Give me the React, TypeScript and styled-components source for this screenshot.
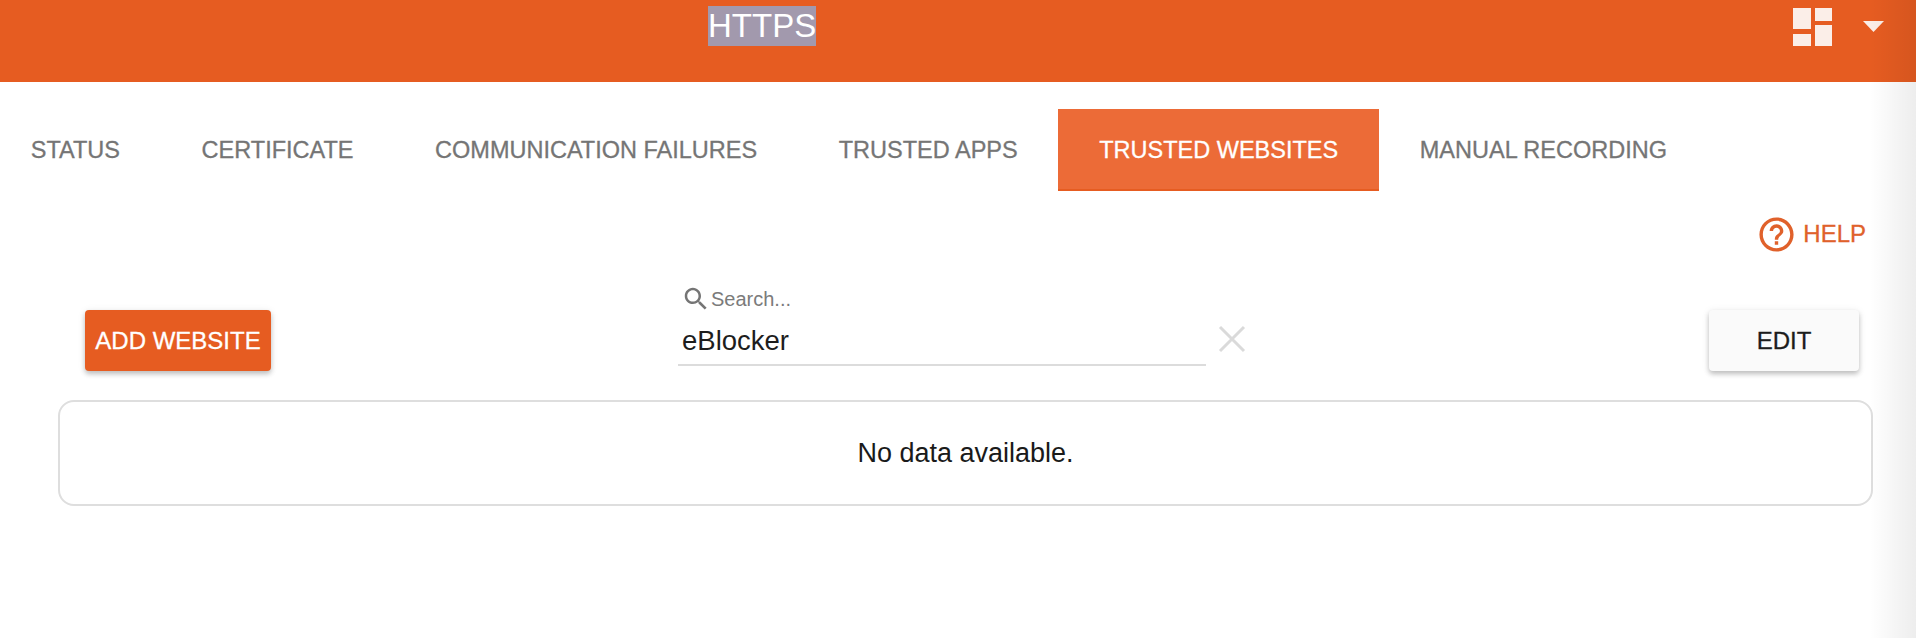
import { createGlobalStyle, styled } from "styled-components";

const GlobalStyle = createGlobalStyle`
  html, body {
    margin: 0;
    padding: 0;
    background: #fff;
    overflow: hidden;
  }

  body {
    font-family: "Liberation Sans", Arial, sans-serif;
  }
`;

const Page = styled.div`
  position: relative;
  width: 1916px;
  height: 638px;
  overflow: hidden;

  &::after {
    content: "";
    position: absolute;
    top: 0;
    right: 0;
    bottom: 0;
    width: 46px;
    background: linear-gradient(to right, rgba(0, 0, 0, 0), rgba(0, 0, 0, 0.07));
    pointer-events: none;
  }
`;

const Header = styled.header`
  display: flex;
  align-items: flex-start;
  justify-content: space-between;
  height: 82px;
  padding: 6px 32px 0 708px;
  box-sizing: border-box;
  background: #e65c21;
`;

const Title = styled.span`
  font-size: 33px;
  line-height: 40px;
  color: #fff;
  background: #a299ad;
`;

const HeaderTools = styled.div`
  display: flex;
  align-items: flex-start;
  gap: 30px;
  padding-top: 2px;
`;

const Tabs = styled.nav`
  display: flex;
  margin: 27px 0 0 -10px;
`;

const Tab = styled.div<{ $active?: boolean }>`
  height: 82px;
  padding: 3px 40.8px 0;
  box-sizing: border-box;
  display: flex;
  align-items: center;
  font-size: 23.5px;
  -webkit-text-stroke: 0.3px currentColor;
  color: ${(p) => (p.$active ? "#fff" : "#757575")};
  background: ${(p) => (p.$active ? "#ec6b37" : "transparent")};
  border-bottom: 2px solid ${(p) => (p.$active ? "#e65c21" : "transparent")};
`;

const HelpRow = styled.div`
  display: flex;
  justify-content: flex-end;
  align-items: center;
  gap: 6px;
  height: 34px;
  margin-top: 26px;
  padding-right: 50px;
  font-size: 24px;
  -webkit-text-stroke: 0.3px currentColor;
  color: #e0612b;
`;

const Toolbar = styled.div`
  display: flex;
  align-items: flex-start;
  margin-top: 36px;
  padding: 0 57px 0 85px;
`;

const Button = styled.button<{ $primary?: boolean }>`
  height: 61px;
  padding: 0;
  width: ${(p) => (p.$primary ? "186px" : "150px")};
  border: 0;
  border-radius: 4px;
  margin-top: 23px;
  font-family: inherit;
  font-size: 24px;
  -webkit-text-stroke: 0.3px currentColor;
  color: ${(p) => (p.$primary ? "#fff" : "#1c1c1c")};
  background: ${(p) => (p.$primary ? "#e65c21" : "#fafafa")};
  box-shadow: 0 3px 5px rgba(0, 0, 0, 0.22), 0 1px 8px rgba(0, 0, 0, 0.08);
`;

const Search = styled.div`
  width: 528px;
  margin-left: 407px;
`;

const SearchLabel = styled.div`
  display: flex;
  align-items: center;
  height: 24px;
  padding-left: 3px;
  font-size: 20px;
  color: #7b7b7b;
`;

const SearchValue = styled.div`
  height: 55px;
  padding: 12px 0 0 4px;
  box-sizing: border-box;
  line-height: 36px;
  font-size: 27.5px;
  color: #1d1d1d;
  border-bottom: 2px solid #dcdcdc;
`;

const ClearIcon = styled.svg`
  flex: none;
  margin: 38px 0 0 12px;
`;

const EditSlot = styled.div`
  margin-left: auto;
`;

const Card = styled.div`
  display: flex;
  align-items: center;
  justify-content: center;
  height: 106px;
  margin: 29px 43px 0 58px;
  box-sizing: border-box;
  border: 2px solid #dedede;
  border-radius: 16px;
  font-size: 27px;
  color: #1a1a1a;
`;

export default function App() {
  return (
    <Page>
      <GlobalStyle />
      <Header>
        <Title>HTTPS</Title>
        <HeaderTools>
          <svg width="40" height="40" viewBox="0 0 40 40" fill="#fbeee8">
            <rect x="0" y="0" width="18" height="21" />
            <rect x="0" y="26" width="18" height="12" />
            <rect x="22" y="0" width="17" height="13" />
            <rect x="22" y="17" width="17" height="21" />
          </svg>
          <svg width="21" height="36" viewBox="0 0 21 36" fill="#fbeee8">
            <path d="M0 13h21L10.500 24z" />
          </svg>
        </HeaderTools>
      </Header>

      <Tabs>
        <Tab>STATUS</Tab>
        <Tab>CERTIFICATE</Tab>
        <Tab>COMMUNICATION FAILURES</Tab>
        <Tab>TRUSTED APPS</Tab>
        <Tab $active>TRUSTED WEBSITES</Tab>
        <Tab>MANUAL RECORDING</Tab>
      </Tabs>

      <HelpRow>
        <svg width="41" height="41" viewBox="0 0 24 24" fill="currentColor">
          <path d="M11 18h2v-2h-2v2zm1-16C6.480 2 2 6.480 2 12s4.480 10 10 10 10-4.480 10-10S17.520 2 12 2zm0 18c-4.410 0-8-3.590-8-8s3.590-8 8-8 8 3.590 8 8-3.590 8-8 8zm0-14c-2.210 0-4 1.790-4 4h2c0-1.100.9-2 2-2s2 .9 2 2c0 2-3 1.750-3 5h2c0-2.250 3-2.500 3-5 0-2.210-1.790-4-4-4z" />
        </svg>
        HELP
      </HelpRow>

      <Toolbar>
        <Button $primary>ADD WEBSITE</Button>
        <Search>
          <SearchLabel>
            <svg width="30" height="30" viewBox="0 0 24 24" fill="#757575">
              <path d="M15.500 14h-.79l-.28-.27C15.410 12.590 16 11.110 16 9.500 16 5.910 13.090 3 9.500 3S3 5.910 3 9.500 5.910 16 9.500 16c1.610 0 3.090-.59 4.230-1.570l.27.28v.79l5 4.990L20.490 19l-4.990-5zm-6 0C7.010 14 5 11.990 5 9.500S7.010 5 9.500 5 14 7.010 14 9.500 11.990 14 9.500 14z" />
            </svg>
            Search...
          </SearchLabel>
          <SearchValue>eBlocker</SearchValue>
        </Search>
        <ClearIcon width="28" height="28" viewBox="0 0 28 28" stroke="#dadada" strokeWidth="3">
          <path d="M2 2l24 24M26 2L2 26" />
        </ClearIcon>
        <EditSlot>
          <Button>EDIT</Button>
        </EditSlot>
      </Toolbar>

      <Card>No data available.</Card>
    </Page>
  );
}
